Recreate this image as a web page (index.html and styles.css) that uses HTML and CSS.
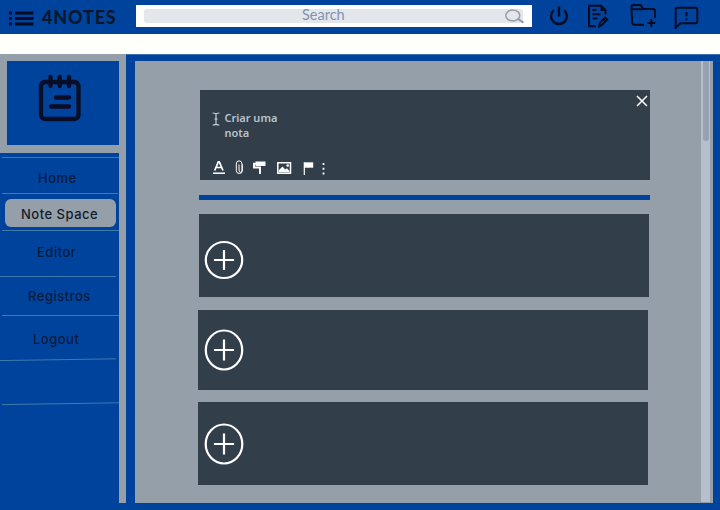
FILE: index.html
```html
<!DOCTYPE html>
<html lang="pt">
<head>
<meta charset="utf-8">
<title>4NOTES</title>
<link rel="stylesheet" href="styles.css">
</head>
<body>
<header class="topbar">
  <svg class="menu-icon" width="25" height="15" viewBox="0 0 25 15"><path d="M0 2h3M0 7.5h3M0 13h3M6 2h18.5M6 7.5h18.5M6 13h18.5"/></svg>
  <h1 class="brand">4NOTES</h1>
  <div class="search"><div class="search-field"><span>Search</span>
    <svg width="20" height="15" viewBox="0 0 20 15"><ellipse cx="7.8" cy="6.5" rx="7" ry="5.4"/><path d="M12.5 9.700l6 4" stroke-width="2"/></svg>
  </div></div>
  <nav class="actions">
    <svg width="20" height="23" viewBox="0 0 20 23"><path d="M10 2.500v10M4.700 6.300A8 7.800 0 1 0 15.300 6.300" stroke-width="2.400"/></svg>
    <svg width="22" height="24" viewBox="0 0 22 24"><path d="M9 22.3H2V1.8h12.2l4.3 4.4v4.3M5.5 6h4M5.5 10.2h8M5.5 14.4h5"/><path d="M13.5 1v6h6z" class="solid"/><path d="M12.2 22.5l.9-4 5-5 2.1 2.1-5 5zM16.3 15.3l2 2"/></svg>
    <svg width="27" height="24" viewBox="0 0 27 24"><path d="M14 20.8H4.5Q2.2 20.8 2.1 18L1.5 3Q1.5 1 3.500 1h7l3 4H23q2 0 2 2v7M2 5.3h11.5M17.3 19h8M21.3 15v8"/></svg>
    <svg width="25" height="25" viewBox="0 0 25 25"><path d="M1.7 23.800V5.500Q1.700 3.700 3.500 3.700h18q1.800 0 1.800 1.800v12q0 1.800-1.800 1.800H6.500zM12.500 8v4.200M12.500 14.300v2"/></svg>
  </nav>
</header>
<div class="workspace">
  <aside class="sidebar">
    <div class="logo">
      <svg width="44" height="50" viewBox="0 0 44 50"><rect x="3" y="8" width="37.500" height="37" rx="4"/><path d="M12.5 3v9M21.7 3v9M31 3v9M18 23.5h13M13 32.5h18"/></svg>
    </div>
    <nav class="menu">
      <a class="item home"><span>Home</span></a>
      <a class="item notes"><span>Note Space</span></a>
      <a class="item editor"><span>Editor</span></a>
      <a class="item records"><span>Registros</span></a>
      <a class="item logout"><span>Logout</span></a>
      <svg class="rules" width="119" height="50" viewBox="0 0 119 50"><path d="M0 3.6L116 1.8M2 47.6L119 45.8"/></svg>
    </nav>
  </aside>
  <main class="board">
    <div class="notes-list">
      <section class="composer">
        <svg class="close" width="12" height="12" viewBox="0 0 12 12"><path d="M1 1l10 10M11 1L1 11"/></svg>
        <div class="prompt">
          <svg width="8" height="14" viewBox="0 0 8 14"><path d="M.7 1q3 0 3.3 1.2Q4.300 1 7.300 1M4 2v10M.7 13q3 0 3.3-1.200Q4.300 13 7.300 13M2.500 7h3"/></svg>
          <p>Criar uma<br>nota</p>
        </div>
        <svg class="tools" width="116" height="16" viewBox="0 0 116 16"><path d="M1 13.200h12" stroke-width="1.500"/><path d="M2.700 10.500L6.300 1.800h1L11 10.500M4 7.500h5.600" stroke-width="1.700"/><path d="M30.300 4.500v6q0 3-3 3t-3-3V4q0-3.200 2.800-3.200T30 4v6q0 2.300-1.500 2.300T27 10V4.500" stroke-width="1"/><path d="M43.500 1.500h10v4.500h-10z" class="solid"/><path d="M44 3.800h-2v3.700h6v6.500" stroke-width="1.900"/><path d="M65.800 2.800h12.700v10.400H65.800z" stroke-width="1.500"/><path d="M66.800 12.300v-2l3.700-3.700 2.700 3 1.700-1.400 2.600 2.800v1.300z" class="solid"/><circle cx="75.700" cy="5.500" r="1.300" class="solid"/><path d="M92.300 2.300v12.700" stroke-width="1.200"/><path d="M92.300 2.300h8.900v5.400h-8.900z" class="solid"/><path d="M111.500 3v2M111.500 7.700v2M111.500 12.400v2" stroke-width="1.800"/></svg>
      </section>
      <hr class="divider">
      <section class="note first"><svg width="40" height="40" viewBox="0 0 40 40"><ellipse cx="20" cy="20" rx="18.200" ry="18"/><path d="M10 20h20M20 10v20"/></svg></section>
      <section class="note second"><svg width="40" height="42" viewBox="0 0 40 42"><ellipse cx="20" cy="21" rx="18.200" ry="19.500"/><path d="M10 21h20M20 10.500v21"/></svg></section>
      <section class="note third"><svg width="40" height="42" viewBox="0 0 40 42"><ellipse cx="20" cy="21" rx="18.300" ry="19.500"/><path d="M10 21h20M20 10.500v21"/></svg></section>
    </div>
    <div class="scrollbar"><div class="thumb"></div></div>
  </main>
</div>
</body>
</html>
```
FILE: styles.css
```css
* { box-sizing: border-box; }
body { margin: 0; width: 720px; height: 510px; overflow: hidden; background: #00439d; font-family: Inter, sans-serif; }
svg { display: block; flex: none; fill: none; stroke-linecap: butt; }
.topbar { display: flex; height: 34px; align-items: flex-start; }
.menu-icon { margin: 11px 0 0 9px; stroke: #060b22; stroke-width: 3; }
.brand { margin: 6px 0 0 8px; width: 94px; font: 900 18px/22px Lato, sans-serif; letter-spacing: .8px; color: #0b1830; }
.search { width: 396px; height: 22px; margin-top: 5px; padding: 4px 9px 4px 8px; background: #fffffd; }
.search-field { display: flex; height: 14px; align-items: center; background: #e3e7ec; border-radius: 3px; color: #8293ae; font: 14.500px/14px Lato, sans-serif; }
.search-field span { margin-left: 158px; margin-top: -3px; width: 203px; }
.search-field svg { stroke: #999da7; stroke-width: 1.500; margin-right: -2px; }
.actions { display: flex; margin: 4px 0 0 17px; stroke: #060c25; stroke-width: 2; }
.actions svg:nth-child(2) { margin-left: 18px; }
.actions svg:nth-child(3) { margin-left: 21px; }
.actions svg:nth-child(4) { margin-left: 17px; }
.solid { fill: currentColor; stroke: none; }
.actions .solid { fill: #060c25; }
.workspace { display: flex; height: 476px; border-top: 20px solid #fffffc; box-shadow: inset 0 1px #3c72b4; }
.sidebar { width: 126px; height: 449px; padding-top: 7px; background: #959fa9; }
.logo { width: 112.400px; height: 84px; margin: 0 0 8px 7px; padding: 13px 0 0 31px; background: #00439d; }
.logo svg { stroke: #090d25; stroke-width: 4.300; stroke-linecap: round; }
.menu { width: 119.400px; height: 350px; padding-top: 4px; background: #00439d; }
.item { display: flex; height: 37px; border-top: 1px solid #3f79ad; margin-left: 2px; font-size: 13px; font-weight: 500; line-height: 16px; letter-spacing: .5px; color: #0b1c3c; white-space: nowrap; }
.home { padding: 12px 0 0 36px; height: 36px; }
.notes { padding: 5px 0 0 3px; margin-right: 1px; }
.notes span { width: 111px; height: 28px; padding: 7px 0 0 16px; border-radius: 6px; background: #959fa9; color: #131c2b; }
.editor { padding: 13px 0 0 35px; height: 46px; }
.records { margin-left: 0; margin-right: 3px; padding: 11px 0 0 28px; height: 39px; }
.logout { padding: 15px 0 0 31px; height: 42px; }
.rules { stroke: #3f79ad; stroke-width: 1; }
.board { display: flex; width: 578px; height: 442px; margin: 7px 0 0 9px; background: #959fa9; }
.notes-list { width: 565.500px; padding: 29.400px 0 0 63.400px; }
.composer { width: 450px; height: 90px; margin-left: 2px; padding: 5px 2px 0 12px; background: #323f4b; }
.close { margin-left: auto; stroke: #fff; stroke-width: 1.500; }
.prompt { display: flex; margin-top: 5px; gap: 4px; }
.prompt svg { stroke: #d4dae0; stroke-width: 1.100; }
.prompt p { margin: -2px 0 0; font: 600 11px/15px "Noto Sans", sans-serif; color: #b8c2cc; }
.tools { margin-top: 20px; stroke: #fff; color: #fff; }
.divider { width: 451px; height: 5px; margin: 14.500px 0 14.500px 1px; border: 0; background: #00439d; }
.note { width: 450px; background: #323f4b; padding-left: 5.500px; }
.note svg { stroke: #fff; stroke-width: 2.200; }
.first { height: 82.500px; margin-left: 1px; padding: 26px 0 0 4.500px; }
.second { height: 80.500px; margin-top: 13px; padding-top: 19.500px; }
.third { height: 82.500px; margin-top: 12px; padding-top: 20.500px; }
.scrollbar { width: 9px; height: 441px; background: #b7bfcc; padding: 0 1px 0 2px; }
.thumb { width: 6px; height: 80px; border-radius: 0 0 3px 3px; background: #96a2b2; }
```
